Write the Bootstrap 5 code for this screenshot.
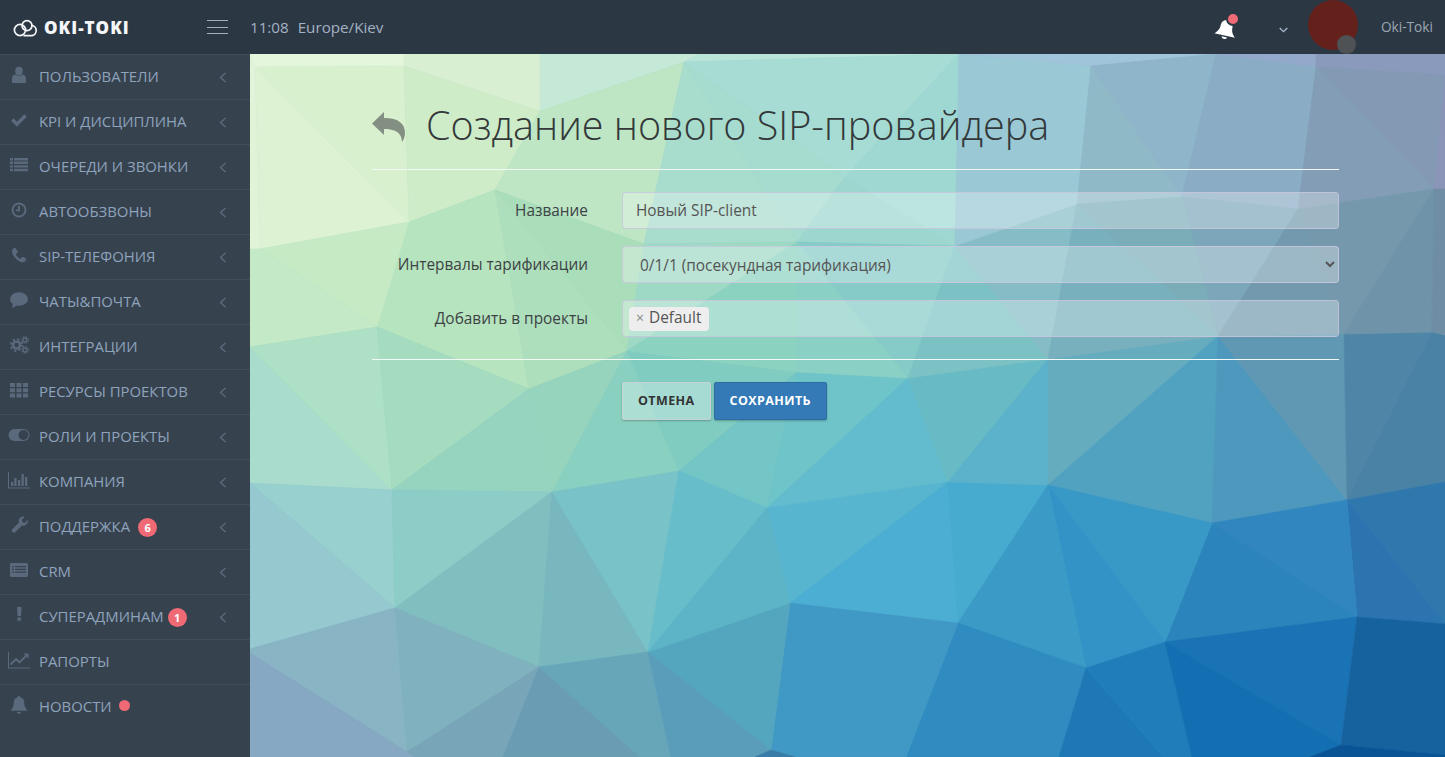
<!DOCTYPE html>
<html lang="ru">
<head>
<meta charset="utf-8">
<title>Oki-Toki</title>
<link href="https://cdn.jsdelivr.net/npm/bootstrap@5.3.0/dist/css/bootstrap.min.css" rel="stylesheet">
<style>
html,body{height:100%;overflow:hidden}
body{font-family:"Open Sans","Noto Sans",sans-serif;font-size:14px;background:#37424f}
.top-strip{height:54px;background:#2c3744;color:#a3b1c2}
.logo-zone{width:207px;padding-left:13px;padding-top:1px}
.logo-text{font-family:"Open Sans",sans-serif;font-weight:800;font-size:17px;letter-spacing:1px;color:#f4f6f8;margin-left:6px}
.burger{width:21px;height:14px;border-top:1px solid #a6aeb8;border-bottom:1px solid #a6aeb8;position:relative;margin-right:22px}
.burger::after{content:"";position:absolute;left:0;right:0;top:6px;height:1px;background:#a6aeb8}
.clock-text{font-size:15.2px}
.clock-text span{margin-left:5px}
.bell-wrap{width:22px;height:22px;position:relative;margin-right:40px;margin-top:1px}
.bell-wrap svg{transform:rotate(12deg) scale(1.15)}
.bell-dot{position:absolute;width:14px;height:14px;border-radius:50%;background:#f06a75;border:2px solid #2c3744;right:-3px;top:-5px}
.chev-down{margin:5px 0 0 2px}
.ava{width:50px;height:50px;border-radius:50%;background:#64201b;position:relative;margin:0 23px 4px 20px}
.ava-dot{position:absolute;width:19px;height:19px;border-radius:50%;background:#4e5254;right:2px;bottom:-4px}
.ava-name{font-size:13.7px;color:#9aa6b2;margin-right:12px}
.body-zone{height:703px}
.side{width:250px;background:#37424f;flex:none;border-top:1px solid #414d5a}
.side-row{height:45px;border-bottom:1px solid #414d5a;padding:0 0 1px 8px;color:#8ea3bc;font-size:14.9px;text-decoration:none;position:relative}
.side-row:hover{color:#8ea3bc}
.side-row svg.ni{width:22px;height:18px;fill:#5a697c;margin-right:9px;flex:none;margin-top:-3px}
.side-row .chev{position:absolute;left:219px;top:17px;width:8px;height:11px;fill:none;stroke:#5e6d7e;stroke-width:1.2}
.side-row:last-child{border-bottom-color:transparent}
.count-pill{width:19px;height:19px;border-radius:50%;background:#f06a75;color:#fff;font-size:11px;font-weight:700;line-height:19px;text-align:center;margin-top:2px}
.pill-close{margin-left:4px}
.news-dot{width:11px;height:11px;border-radius:50%;background:#f06a75;margin-left:7px;margin-top:-3px}
.main-zone{position:relative;overflow:hidden;min-width:0}
.mesh{position:absolute;inset:0;width:100%;height:100%;display:block}
.sheet{position:relative;width:967px;margin-left:122px;padding-top:48px}
.back-ico{width:34px;height:32px;fill:#838f82;margin-right:20px;margin-top:10px;flex:none}
.page-title{font-family:"Open Sans",sans-serif;font-weight:300;font-size:39.5px;line-height:46px;color:#33383a;margin:0}
.head-row{height:68px;border-bottom:1px solid #f2f8f5;margin-bottom:22px}
.field-row{margin-bottom:17px;height:37px}
.field-label{width:216px;text-align:right;color:#3d4345;font-size:15.4px;margin:0 34px 0 0;flex:none}
.field-label-low{padding-top:1px}
.glass{height:37px;background-color:rgba(255,255,255,.3);border:1px solid rgba(200,200,222,.9);border-radius:4px;color:#555;font-size:15.4px;padding:0 13px}
.glass:focus{background-color:rgba(255,255,255,.3);color:#555}
select.glass{appearance:auto;-webkit-appearance:auto;background-image:none;padding:2px 13px 0;color:#555}
.tag-box{padding:0 6px}
.chip{background:#eee;border-radius:4px;height:24px;padding:0 8px 0 7px;color:#555;font-size:15.4px;line-height:22px}
.chip i{font-style:normal;color:#888;margin-right:5px;font-size:14px}
.foot-line{border-top:1px solid #f2f8f5;margin-top:22px;padding:22px 0 0 250px}
.act-btn{height:38px;font-size:12.5px;font-weight:700;border-radius:2px;padding:0 15px;letter-spacing:.4px;box-shadow:0 1px 2px rgba(0,0,0,.25)}
.act-ghost{background:rgba(255,255,255,.3);border:1px solid #c6d2d6;color:#333;margin-right:3px}
.act-blue{background:#337ab7;border:1px solid #2e6da4;color:#fff}
</style>
</head>
<body>
<header class="top-strip d-flex align-items-center">
  <div class="logo-zone d-flex align-items-center">
    <svg width="25" height="18" viewBox="0 0 25 18" fill="none" stroke="#f4f6f8" stroke-width="1.7"><circle cx="7" cy="11" r="5.6"/><circle cx="14" cy="6.6" r="5"/><path d="M17 16.600H10.500M18.300 6.300a5.200 5.200 0 0 1 .7 10.300H17"/></svg>
    <span class="logo-text">OKI-TOKI</span>
  </div>
  <div class="burger"></div>
  <div class="clock-text">11:08 <span>Europe/Kiev</span></div>
  <div class="ms-auto d-flex align-items-center">
    <div class="bell-wrap">
      <svg width="22" height="22" viewBox="0 0 22 22" fill="#fff"><path d="M11 2c-.8 0-1.300.5-1.300 1.200C7 3.800 5.800 6 5.800 8.500c0 4-1.600 6-4 8.300h18.400c-2.400-2.300-4-4.300-4-8.300 0-2.500-1.200-4.700-3.900-5.300C12.300 2.500 11.800 2 11 2zM8.500 18a2.600 2.600 0 0 0 5 0z"/></svg>
      <span class="bell-dot"></span>
    </div>
    <svg class="chev-down" width="9" height="6" viewBox="0 0 9 6" fill="none" stroke="#a9bacb" stroke-width="1.300"><path d="M.7 1 4.500 4.700 8.300 1"/></svg>
    <div class="ava"><span class="ava-dot"></span></div>
    <div class="ava-name">Oki-Toki</div>
  </div>
</header>
<div class="body-zone d-flex">
  <nav class="side nav flex-column flex-nowrap">
    <a class="side-row d-flex align-items-center" href="#"><svg class="ni" viewBox="-2 0 22 18"><ellipse cx="9" cy="5" rx="3.800" ry="4.200"/><path d="M2 16v-3.500c0-2.500 1.800-4 3.600-4 1 .9 2.100 1.300 3.400 1.300s2.400-.4 3.400-1.300c1.800 0 3.600 1.500 3.600 4V16c0 .6-.4 1-1 1H3c-.6 0-1-.4-1-1z"/></svg>ПОЛЬЗОВАТЕЛИ<svg class="chev" viewBox="0 0 8 11"><path d="M6.500 1 1.500 5.500 6.500 10"/></svg></a>
    <a class="side-row d-flex align-items-center" href="#"><svg class="ni" viewBox="-2 0 22 18"><path d="M1 9.800 3.500 7.300l3.400 3.400 7.300-7.500 2.600 2.600-9.900 10z"/></svg>KPI И ДИСЦИПЛИНА<svg class="chev" viewBox="0 0 8 11"><path d="M6.500 1 1.500 5.500 6.500 10"/></svg></a>
    <a class="side-row d-flex align-items-center" href="#"><svg class="ni" viewBox="-2 0 22 18"><path d="M0 2h3v2.400H0zM4 2h14v2.400H4zM0 5.600h3V8H0zM4 5.600h14V8H4zM0 9.200h3v2.400H0zM4 9.200h14v2.400H4zM0 12.800h3v2.400H0zM4 12.800h14v2.400H4z"/></svg>ОЧЕРЕДИ И ЗВОНКИ<svg class="chev" viewBox="0 0 8 11"><path d="M6.500 1 1.500 5.500 6.500 10"/></svg></a>
    <a class="side-row d-flex align-items-center" href="#"><svg class="ni" viewBox="-2 0 22 18"><circle cx="9" cy="9" r="6.500" fill="none" stroke="#5a697c" stroke-width="2"/><path d="M8 5h2v5.200H5.800V8.500H8z"/></svg>АВТООБЗВОНЫ<svg class="chev" viewBox="0 0 8 11"><path d="M6.500 1 1.500 5.500 6.500 10"/></svg></a>
    <a class="side-row d-flex align-items-center" href="#"><svg class="ni" viewBox="-2 0 22 18"><path d="M16 13c0 .4-.2 1.300-.4 1.700-.3.6-1.800 1.500-3 1.500-2.200 0-6-2.600-8-5C2.800 9 2 6.800 2 5.200c0-1.200.9-2.700 1.500-3 .4-.2 1.300-.4 1.700-.4l.3.100c.3.100.9 1.300 1.200 1.900l1 1.700c.1.200.2.300.2.500 0 .8-2 1.600-2 2.400 0 .4.800 1.500 1.800 2.600 1 1 2.200 1.800 2.600 1.800.8 0 1.600-2 2.400-2 .2 0 .3.100.5.200l1.700 1c.6.300 1.800.9 1.900 1.200z"/></svg>SIP-ТЕЛЕФОНИЯ<svg class="chev" viewBox="0 0 8 11"><path d="M6.500 1 1.500 5.500 6.500 10"/></svg></a>
    <a class="side-row d-flex align-items-center" href="#"><svg class="ni" viewBox="-2 0 22 18"><ellipse cx="9" cy="8" rx="9" ry="6.800"/><path d="M3 12 2 17.200 8.500 13.500z"/></svg>ЧАТЫ&amp;ПОЧТА<svg class="chev" viewBox="0 0 8 11"><path d="M6.500 1 1.500 5.500 6.500 10"/></svg></a>
    <a class="side-row d-flex align-items-center" href="#"><svg class="ni" viewBox="-2 0 22 18"><circle cx="6.500" cy="9" r="3.500" fill="none" stroke="#5a697c" stroke-width="2.600"/><circle cx="6.500" cy="9" r="5.800" fill="none" stroke="#5a697c" stroke-width="1.800" stroke-dasharray="2.200 2.360"/><circle cx="15" cy="4" r="2" fill="none" stroke="#5a697c" stroke-width="1.300"/><circle cx="15" cy="4" r="3.300" fill="none" stroke="#5a697c" stroke-width="1.200" stroke-dasharray="1.300 1.290"/><circle cx="15" cy="14" r="2" fill="none" stroke="#5a697c" stroke-width="1.300"/><circle cx="15" cy="14" r="3.300" fill="none" stroke="#5a697c" stroke-width="1.200" stroke-dasharray="1.300 1.290"/></svg>ИНТЕГРАЦИИ<svg class="chev" viewBox="0 0 8 11"><path d="M6.500 1 1.500 5.500 6.500 10"/></svg></a>
    <a class="side-row d-flex align-items-center" href="#"><svg class="ni" viewBox="-2 0 22 18"><path d="M0 2h5v4H0zM6.500 2h5v4h-5zM13 2h5v4h-5zM0 7.300h5v4H0zM6.500 7.300h5v4h-5zM13 7.300h5v4h-5zM0 12.600h5v4H0zM6.500 12.600h5v4h-5zM13 12.600h5v4h-5z"/></svg>РЕСУРСЫ ПРОЕКТОВ<svg class="chev" viewBox="0 0 8 11"><path d="M6.500 1 1.500 5.500 6.500 10"/></svg></a>
    <a class="side-row d-flex align-items-center" href="#"><svg class="ni" viewBox="0 0 22 18"><rect x="0.500" y="3" width="21" height="12" rx="6"/><circle cx="15.500" cy="9" r="5" fill="#37424f"/></svg>РОЛИ И ПРОЕКТЫ<svg class="chev" viewBox="0 0 8 11"><path d="M6.500 1 1.500 5.500 6.500 10"/></svg></a>
    <a class="side-row d-flex align-items-center" href="#"><svg class="ni" viewBox="0 0 22 18"><path d="M0 1h1v15.500h21v1H0zM3 11h2.300v4H3zM6.300 7h2.300v8H6.300zM10 9h2.300v6H10zM13.500 3h2.300v12h-2.300zM17 6h2.300v9H17z"/></svg>КОМПАНИЯ<svg class="chev" viewBox="0 0 8 11"><path d="M6.500 1 1.500 5.500 6.500 10"/></svg></a>
    <a class="side-row d-flex align-items-center" href="#"><svg class="ni" viewBox="-2 0 22 18"><path d="M17.500 3.800c.2.600.3 1 .3 1.500 0 2.400-2 4.400-4.400 4.400-.5 0-1-.1-1.400-.3l-6.600 6.600c-.8.800-2.200.8-3 0s-.8-2.200 0-3L9 6.500c-.2-.5-.3-1-.3-1.500C8.700 2.600 10.700.6 13.100.6c.6 0 1.100.1 1.600.3l-2.800 2.800.6 2.600 2.600.6z"/></svg>ПОДДЕРЖКА<span class="count-pill ms-2">6</span><svg class="chev" viewBox="0 0 8 11"><path d="M6.500 1 1.500 5.500 6.500 10"/></svg></a>
    <a class="side-row d-flex align-items-center" href="#"><svg class="ni" viewBox="-2 0 22 18"><path fill-rule="evenodd" d="M1.500 2h15c.8 0 1.500.7 1.500 1.500v11c0 .8-.7 1.500-1.500 1.500h-15C.7 16 0 15.300 0 14.500v-11C0 2.700.7 2 1.500 2zM2 5v1.200h2V5zM5 5v1.200h11V5zM2 7.800V9h2V7.800zM5 7.800V9h11V7.800zM2 10.600v1.200h2v-1.200zM5 10.600v1.200h11v-1.200z"/></svg>CRM<svg class="chev" viewBox="0 0 8 11"><path d="M6.500 1 1.500 5.500 6.500 10"/></svg></a>
    <a class="side-row d-flex align-items-center" href="#"><svg class="ni" viewBox="-2 0 22 18"><path d="M7 1h4.500l-.5 9H7.500zM7.400 11.400h3.700v3.400H7.400z"/></svg>СУПЕРАДМИНАМ<span class="count-pill pill-close">1</span><svg class="chev" viewBox="0 0 8 11"><path d="M6.500 1 1.500 5.500 6.500 10"/></svg></a>
    <a class="side-row d-flex align-items-center" href="#"><svg class="ni" viewBox="0 0 22 18"><path d="M0 1h1v15.500h21v1H0z"/><path d="M2.500 13.500 8 8l3.500 3.500L19 3.800" fill="none" stroke="#5a697c" stroke-width="1.900"/><path d="M15.500 2.500H20.500V7.500z"/></svg>РАПОРТЫ</a>
    <a class="side-row d-flex align-items-center" href="#"><svg class="ni" viewBox="-2 0 22 18"><path d="M9 0c-.8 0-1.300.5-1.300 1.200C5 1.800 3.800 4 3.800 6.500c0 4-1.400 6-3.300 8.300h17c-1.900-2.300-3.300-4.300-3.300-8.300 0-2.500-1.200-4.700-3.900-5.300C10.300.5 9.800 0 9 0zM6.700 16a2.400 2.400 0 0 0 4.600 0z"/></svg>НОВОСТИ<span class="news-dot"></span></a>
  </nav>
  <main class="main-zone flex-grow-1">
    <svg class="mesh" viewBox="250 54 1195 703" preserveAspectRatio="none" id="mesh">
      <rect x="250" y="54" width="1195" height="703" fill="#7fbcc8"/>
      <polygon fill="#e4f6dc" points="250,54 404,54 404,66 255,67"/>
      <polygon fill="#e2f4d8" points="250,54 255,67 260,249 250,249"/>
      <polygon fill="#d9f0cf" points="255,67 404,66 409,222"/>
      <polygon fill="#ddf2d3" points="255,67 409,222 260,249"/>
      <polygon fill="#d8efd1" points="404,54 540,54 540,111 404,66"/>
      <polygon fill="#cfecc8" points="404,66 540,111 495,190 409,222"/>
      <polygon fill="#c6e8d6" points="540,54 700,54 684,62 540,111"/>
      <polygon fill="#bee6c5" points="540,111 684,62 644,244 495,190"/>
      <polygon fill="#b6e4bf" points="409,222 495,190 529,389 377,327"/>
      <polygon fill="#aadeba" points="495,190 644,244 627,351"/>
      <polygon fill="#aedfbc" points="495,190 627,351 529,389"/>
      <polygon fill="#c6ebc4" points="260,249 409,222 377,327"/>
      <polygon fill="#c4e9c6" points="250,249 260,249 377,327 250,347"/>
      <polygon fill="#a9dccd" points="250,347 392,490 250,483"/>
      <polygon fill="#aee0c5" points="250,347 377,327 392,490"/>
      <polygon fill="#a5dcc0" points="377,327 529,389 392,490"/>
      <polygon fill="#96d4c0" points="529,389 552,492 392,490"/>
      <polygon fill="#96d4bd" points="529,389 627,351 552,492"/>
      <polygon fill="#8ad0c0" points="627,351 679,471 552,492"/>
      <polygon fill="#80ccc0" points="627,351 797,372 679,471"/>
      <polygon fill="#74c5c5" points="679,471 797,372 767,508"/>
      <polygon fill="#6ec4c8" points="797,372 908,378 767,508"/>
      <polygon fill="#62bccd" points="767,508 908,378 948,482"/>
      <polygon fill="#58b5cf" points="767,508 948,482 790,603"/>
      <polygon fill="#4baed2" points="790,603 948,482 958,623"/>
      <polygon fill="#47abd0" points="948,482 1048,485 958,623"/>
      <polygon fill="#68bac5" points="908,378 1048,359 948,482"/>
      <polygon fill="#5bb2ca" points="1048,359 1048,485 948,482"/>
      <polygon fill="#66acbf" points="1048,359 1218,336 1048,485"/>
      <polygon fill="#51a1c1" points="1048,485 1218,336 1212,523"/>
      <polygon fill="#4e98bd" points="1218,336 1347,500 1212,523"/>
      <polygon fill="#6098b3" points="1218,336 1344,334 1347,500"/>
      <polygon fill="#4f86a8" points="1344,334 1432,332 1347,500"/>
      <polygon fill="#4a82a6" points="1432,332 1445,335 1445,482 1347,500"/>
      <polygon fill="#2f78ad" points="1347,500 1445,482 1445,624"/>
      <polygon fill="#2b74b0" points="1347,500 1445,624 1357,617"/>
      <polygon fill="#3186bf" points="1212,523 1347,500 1357,617"/>
      <polygon fill="#2b84bc" points="1212,523 1357,617 1165,642"/>
      <polygon fill="#3898c6" points="1048,485 1212,523 1165,642"/>
      <polygon fill="#3393c7" points="1048,485 1165,642 1086,668"/>
      <polygon fill="#3b9ac6" points="1048,485 1086,668 958,623"/>
      <polygon fill="#2f8bc0" points="958,623 1086,668 1059,757 906,757"/>
      <polygon fill="#4098c4" points="790,603 958,623 906,757 795,757 771,750"/>
      <polygon fill="#54a6bf" points="790,603 771,750 648,652"/>
      <polygon fill="#1f78b6" points="1086,668 1164,757 1059,757"/>
      <polygon fill="#217db9" points="1086,668 1165,642 1192,757 1164,757"/>
      <polygon fill="#1a73b4" points="1165,642 1357,617 1341,745"/>
      <polygon fill="#136eb2" points="1165,642 1341,745 1310,757 1192,757"/>
      <polygon fill="#15629f" points="1357,617 1445,624 1445,755 1341,745"/>
      <polygon fill="#0a5496" points="1341,745 1445,755 1445,757 1310,757"/>
      <polygon fill="#b9e4d8" points="700,54 959,54 684,62"/>
      <polygon fill="#a7dcd4" points="684,62 959,54 845,177"/>
      <polygon fill="#a6dbcf" points="684,62 845,177 797,242"/>
      <polygon fill="#a8dccc" points="684,62 797,242 644,244"/>
      <polygon fill="#9fd8d3" points="959,54 955,246 845,177"/>
      <polygon fill="#9dd6cf" points="845,177 955,246 797,242"/>
      <polygon fill="#9ed9c5" points="644,244 797,242 627,351"/>
      <polygon fill="#86cbc8" points="797,242 955,246 908,378"/>
      <polygon fill="#8bd0c4" points="797,242 908,378 797,372"/>
      <polygon fill="#8cd2c0" points="627,351 797,242 797,372"/>
      <polygon fill="#7cc2c5" points="955,246 1048,359 908,378"/>
      <polygon fill="#85bcc5" points="955,246 1077,204 1048,359"/>
      <polygon fill="#9ac8d4" points="959,54 1091,66 1077,204 955,246"/>
      <polygon fill="#a0c5da" points="959,54 1216,54 1091,66"/>
      <polygon fill="#90b9c8" points="1091,66 1182,197 1077,204"/>
      <polygon fill="#8eb5c9" points="1091,66 1216,54 1182,197"/>
      <polygon fill="#8aacc5" points="1216,54 1316,67 1298,209 1182,197"/>
      <polygon fill="#93a9cc" points="1216,54 1316,54 1316,67"/>
      <polygon fill="#8a9abc" points="1316,54 1445,54 1445,75 1316,67"/>
      <polygon fill="#8499b3" points="1316,67 1445,75 1434,189"/>
      <polygon fill="#829db5" points="1316,67 1434,189 1298,209"/>
      <polygon fill="#8a95b8" points="1445,75 1445,189 1434,189"/>
      <polygon fill="#7598ac" points="1298,209 1434,189 1344,334"/>
      <polygon fill="#6f93a8" points="1434,189 1432,332 1344,334"/>
      <polygon fill="#7ca6b9" points="1182,197 1298,209 1218,336"/>
      <polygon fill="#7299ad" points="1298,209 1344,334 1218,336"/>
      <polygon fill="#7badb8" points="1077,204 1182,197 1218,336"/>
      <polygon fill="#78b0bd" points="1077,204 1218,336 1048,359"/>
      <polygon fill="#6f8ea6" points="1434,189 1445,189 1445,335 1432,332"/>
      <polygon fill="#97d0cf" points="250,483 392,490 395,608"/>
      <polygon fill="#95c8cf" points="250,483 395,608 250,649"/>
      <polygon fill="#8dcdc8" points="392,490 552,492 395,608"/>
      <polygon fill="#81bec0" points="552,492 539,667 395,608"/>
      <polygon fill="#77b7bd" points="552,492 648,652 539,667"/>
      <polygon fill="#79c3c8" points="552,492 679,471 648,652"/>
      <polygon fill="#68bdcb" points="679,471 767,508 648,652"/>
      <polygon fill="#5db4c6" points="767,508 790,603 648,652"/>
      <polygon fill="#88b4c4" points="250,649 395,608 407,752 250,653"/>
      <polygon fill="#80b1be" points="395,608 539,667 407,752"/>
      <polygon fill="#86a8c2" points="250,653 407,752 415,757 250,757"/>
      <polygon fill="#79a5b8" points="407,752 539,667 503,757 415,757"/>
      <polygon fill="#6a9db3" points="539,667 640,757 503,757"/>
      <polygon fill="#67a5b9" points="539,667 648,652 671,757 640,757"/>
      <polygon fill="#5a9dbb" points="648,652 771,750 755,757 671,757"/>
      <polygon fill="#3a7ca8" points="771,750 795,757 755,757"/>
    </svg>
    <div class="sheet">
      <div class="head-row d-flex align-items-start">
        <svg class="back-ico" viewBox="0 0 34 32"><path d="M0 11.500 12 0V6C27 6 33 12 33 21 33 25 31 29 30 30 30 24 27 17 12 17V23Z"/></svg>
        <h1 class="page-title">Создание нового SIP-провайдера</h1>
      </div>
      <form>
        <div class="field-row d-flex align-items-center">
          <label class="field-label" for="f1">Название</label>
          <input id="f1" class="form-control glass" type="text" value="Новый SIP-client">
        </div>
        <div class="field-row d-flex align-items-center">
          <label class="field-label field-label-low" for="f2">Интервалы тарификации</label>
          <select id="f2" class="form-select glass"><option>0/1/1 (посекундная тарификация)</option></select>
        </div>
        <div class="field-row d-flex align-items-center mb-0">
          <label class="field-label">Добавить в проекты</label>
          <div class="form-control glass tag-box d-flex align-items-center"><span class="chip"><i>×</i>Default</span></div>
        </div>
        <div class="foot-line d-flex">
          <button type="button" class="btn act-btn act-ghost">ОТМЕНА</button>
          <button type="button" class="btn act-btn act-blue">СОХРАНИТЬ</button>
        </div>
      </form>
    </div>
  </main>
</div>
<script src="https://cdn.jsdelivr.net/npm/bootstrap@5.3.0/dist/js/bootstrap.bundle.min.js"></script>
<script>
document.querySelectorAll('#mesh polygon').forEach(function(p){p.setAttribute('stroke',p.getAttribute('fill'));p.setAttribute('stroke-width','.6');});
</script>
</body>
</html>
